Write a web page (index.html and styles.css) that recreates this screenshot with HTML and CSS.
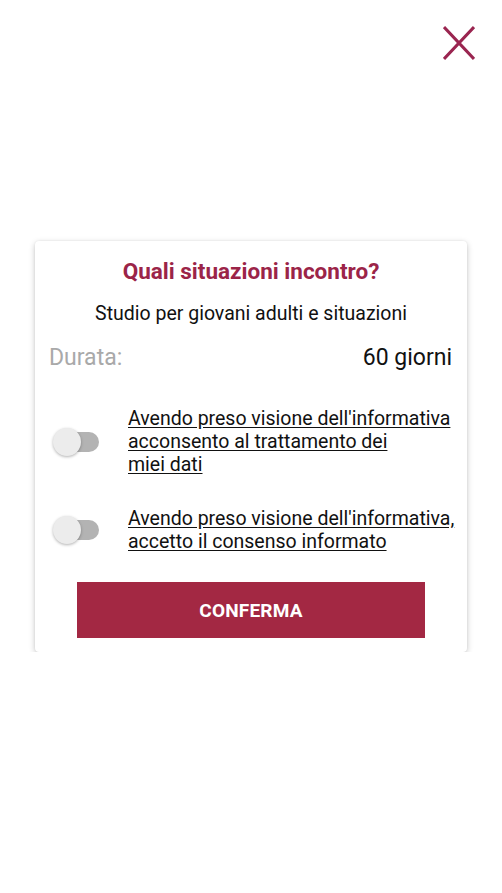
FILE: index.html
```html
<!DOCTYPE html>
<html lang="it">
<head>
    <meta charset="UTF-8">
    <meta name="viewport" content="width=device-width, initial-scale=1.0">
    <title>Quali situazioni incontro?</title>
    <link rel="stylesheet" href="styles.css">
</head>
<body>
    <div class="top-bar">
        <button class="close-btn" aria-label="Chiudi">
            <svg width="32" height="34" viewBox="0 0 32 34">
                <path d="M1 1 L31 33 M31 1 L1 33" stroke="#9a2550" stroke-width="3" fill="none"/>
            </svg>
        </button>
    </div>

    <div class="study-card">
        <h1 class="study-title">Quali situazioni incontro?</h1>
        <p class="study-subtitle">Studio per giovani adulti e situazioni</p>

        <div class="duration-row">
            <span class="duration-label">Durata:</span>
            <span class="duration-value">60 giorni</span>
        </div>

        <label class="consent-row first">
            <span class="toggle"><span class="toggle-track"></span><span class="toggle-thumb"></span></span>
            <a class="consent-text" href="#">Avendo preso visione dell'informativa<br>acconsento al trattamento dei<br>miei dati</a>
        </label>

        <label class="consent-row">
            <span class="toggle"><span class="toggle-track"></span><span class="toggle-thumb"></span></span>
            <a class="consent-text" href="#">Avendo preso visione dell'informativa,<br>accetto il consenso informato</a>
        </label>

        <button class="confirm-btn">CONFERMA</button>
    </div>
</body>
</html>
```

FILE: styles.css
```css
body { margin: 0; background: #fff; font-family: Roboto, "Noto Sans", Arial, sans-serif; color: #111; }

.top-bar { display: flex; justify-content: flex-end; padding: 26px 27px 0 0; height: 215px; box-sizing: border-box; }
.close-btn { background: none; border: 0; padding: 0; width: 32px; height: 34px; cursor: pointer; }
.close-btn svg { display: block; }

.study-card { width: 432px; margin: 26px 0 0 35px; box-sizing: border-box; padding: 17px 14px 14px; background: #fff; border-radius: 4px; box-shadow: 0 2px 6px rgba(0,0,0,0.22), 0 0 2px rgba(0,0,0,0.08); }

.study-title { margin: 0; font-size: 22.5px; line-height: 26px; font-weight: 700; text-align: center; color: #9b2448; }
.study-subtitle { margin: 18px 0 0; font-size: 19.5px; line-height: 23px; text-align: center; color: #111; }

.duration-row { display: flex; justify-content: space-between; margin: 19px 1px 0 0; font-size: 23px; line-height: 27px; }
.duration-label { color: #a9a9a9; }
.duration-value { color: #111; }

.consent-row { display: flex; align-items: center; margin-top: 31px; }
.consent-row.first { margin-top: 36px; }
.toggle { position: relative; flex: none; width: 46px; height: 28px; margin: 0 29px 0 4px; }
.toggle-track { position: absolute; left: 7px; top: 4px; width: 39px; height: 20px; border-radius: 10px; background: #b3b3b3; }
.toggle-thumb { position: absolute; left: 0; top: 0; width: 28px; height: 28px; border-radius: 50%; background: #ececec; box-shadow: 0 1px 3px rgba(0,0,0,0.3); }
.consent-text { font-size: 19.5px; line-height: 23px; color: #111; white-space: nowrap; text-decoration: underline; text-underline-offset: 2px; }

.confirm-btn { display: block; width: 348px; height: 56px; margin: 29px auto 0; border: 0; border-radius: 0; background: #a32843; color: #fff; font-family: Roboto, Arial, sans-serif; font-size: 19px; font-weight: 700; letter-spacing: 0.2px; }
```
